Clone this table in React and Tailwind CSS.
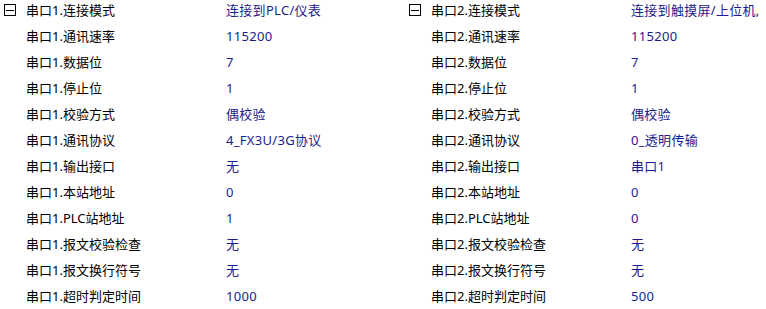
import React from 'react';

const left = [
  ["串口1.连接模式", "连接到PLC/仪表"],
  ["串口1.通讯速率", "115200"],
  ["串口1.数据位", "7"],
  ["串口1.停止位", "1"],
  ["串口1.校验方式", "偶校验"],
  ["串口1.通讯协议", "4_FX3U/3G协议"],
  ["串口1.输出接口", "无"],
  ["串口1.本站地址", "0"],
  ["串口1.PLC站地址", "1"],
  ["串口1.报文校验检查", "无"],
  ["串口1.报文换行符号", "无"],
  ["串口1.超时判定时间", "1000"],
];

const right = [
  ["串口2.连接模式", "连接到触摸屏/上位机,"],
  ["串口2.通讯速率", "115200"],
  ["串口2.数据位", "7"],
  ["串口2.停止位", "1"],
  ["串口2.校验方式", "偶校验"],
  ["串口2.通讯协议", "0_透明传输"],
  ["串口2.输出接口", "串口1"],
  ["串口2.本站地址", "0"],
  ["串口2.PLC站地址", "0"],
  ["串口2.报文校验检查", "无"],
  ["串口2.报文换行符号", "无"],
  ["串口2.超时判定时间", "500"],
];

const Collapse = () => (
  <span className="flex items-center justify-center w-[12px] h-[12px] border border-black">
    <span className="block w-[8px] h-px bg-black" />
  </span>
);

const Panel = ({ rows, width }) => (
  <div className={width}>
    {rows.map(([label, value], idx) => (
      <div key={label} className="flex items-center h-[26px] whitespace-nowrap">
        <div className="w-[26px] pl-[4px] flex items-center">{idx === 0 && <Collapse />}</div>
        <div className="w-[200px] text-black">{label}</div>
        <div className="text-[#1c1c8c] tracking-[0.3px]">{value}</div>
      </div>
    ))}
  </div>
);

export default function App() {
  return (
    <div className="w-[766px] h-[309px] bg-white overflow-hidden">
      <div
        className="flex -mt-[3px] text-[13px] leading-none"
        style={{ fontFamily: '"Noto Sans", "Noto Sans CJK SC", sans-serif' }}
      >
        <Panel rows={left} width="w-[405px] shrink-0" />
        <Panel rows={right} width="flex-1 min-w-0" />
      </div>
    </div>
  );
}
